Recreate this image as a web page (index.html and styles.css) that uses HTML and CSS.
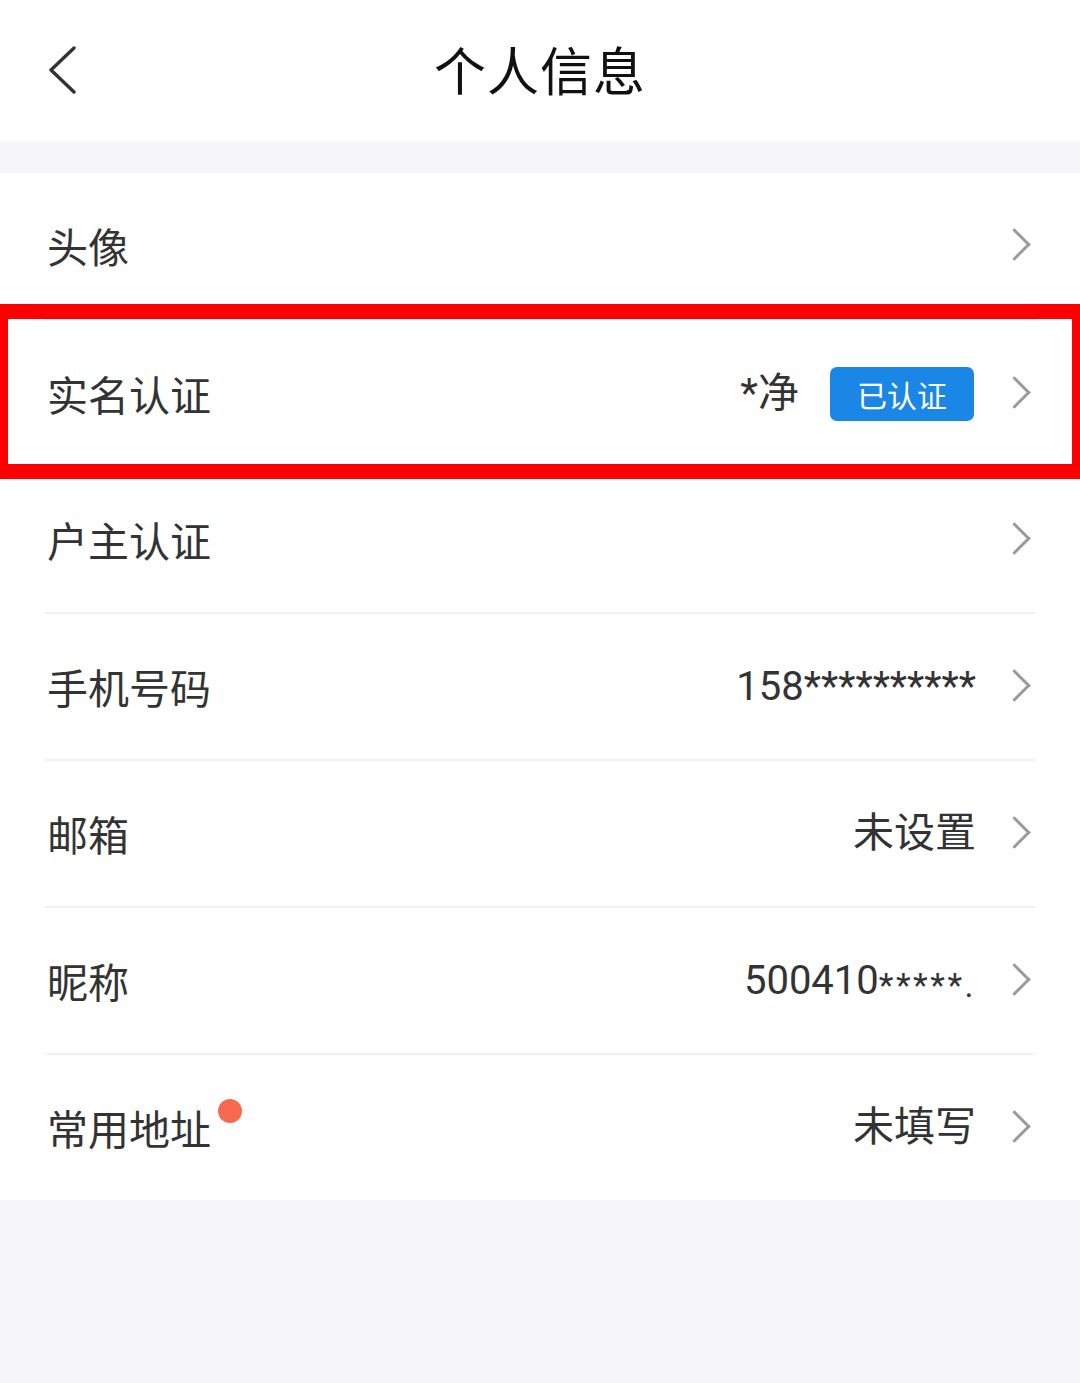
FILE: index.html
```html
<!DOCTYPE html>
<html lang="zh-CN">
<head>
<meta charset="utf-8">
<title>个人信息</title>
<link rel="stylesheet" href="styles.css">
</head>
<body>
<header class="header">
  <div class="back">
    <svg width="30" height="48" viewBox="0 0 30 48"><path d="M27 2 L4 24 L27 46" fill="none" stroke="#333" stroke-width="3.4" stroke-linecap="round" stroke-linejoin="round"/></svg>
  </div>
  <h1 class="title">个人信息</h1>
  <div></div>
</header>
<div class="band"></div>
<ul class="list">
  <li class="row"><div class="inner"><span class="label">头像</span><span class="chev"></span></div></li>
  <li class="row row-hl"><div class="inner"><span class="label">实名认证</span><span class="value">*净</span><span class="badge">已认证</span><span class="chev"></span></div></li>
  <li class="row"><div class="inner"><span class="label">户主认证</span><span class="chev"></span></div></li>
  <li class="row"><div class="inner"><span class="label">手机号码</span><span class="value num">158**********</span><span class="chev"></span></div></li>
  <li class="row"><div class="inner"><span class="label">邮箱</span><span class="value">未设置</span><span class="chev"></span></div></li>
  <li class="row"><div class="inner"><span class="label">昵称</span><span class="value num">500410<span class="small">*****.</span></span><span class="chev"></span></div></li>
  <li class="row row-last"><div class="inner"><span class="label">常用地址</span><span class="dot"></span><span class="value">未填写</span><span class="chev"></span></div></li>
</ul>
</body>
</html>
```
FILE: styles.css
```css
html, body {
  margin: 0;
  padding: 0;
}
body {
  width: 1080px;
  min-height: 1383px;
  background: #f6f6f8;
  font-family: Roboto, "Noto Sans CJK SC", sans-serif;
  color: #333;
}
.header {
  height: 142px;
  background: #fff;
  display: grid;
  grid-template-columns: 1fr auto 1fr;
  align-items: center;
}
.back {
  padding-left: 47px;
  display: flex;
  align-items: center;
  padding-bottom: 2px;
}
.back svg { display: block; }
.title {
  margin: 0;
  font-family: "Noto Sans CJK SC", sans-serif;
  font-weight: 400;
  font-size: 52px;
  color: #111;
  letter-spacing: 1px;
  line-height: 1;
  padding-bottom: 4px;
}
.band {
  height: 31px;
}
.list {
  list-style: none;
  margin: 0;
  padding: 0;
  background: #fff;
}
.row {
  height: 147px;
  padding: 0 45px;
  box-sizing: border-box;
}
.inner {
  height: 100%;
  box-sizing: border-box;
  border-bottom: 2px solid #f1f1f1;
  display: flex;
  align-items: center;
  padding: 0 3px 0 2px;
}
.row-last { height: 145px; }
.row-last .inner { border-bottom: none; }
.label {
  font-family: "Noto Sans CJK SC", sans-serif;
  font-size: 41px;
  color: #333;
  line-height: 1;
  margin-right: auto;
}
.value {
  font-size: 41px;
  line-height: 1;
  color: #333;
  margin-right: 36px;
}
.num {
  font-size: 40px;
}
.small {
  font-size: 34px;
  letter-spacing: 2.5px;
  position: relative;
  top: 3px;
}
.chev {
  width: 20px;
  height: 36px;
  position: relative;
  flex: none;
}
.chev::before {
  content: "";
  position: absolute;
  width: 23px;
  height: 23px;
  border-top: 3px solid #9a9a9a;
  border-right: 3px solid #9a9a9a;
  transform: rotate(45deg);
  left: -9px;
  top: 5px;
  box-sizing: border-box;
}
.row-hl {
  position: relative;
}
.row-hl::after {
  content: "";
  position: absolute;
  left: 0;
  right: 0;
  top: -16px;
  bottom: -12px;
  border-style: solid;
  border-color: #ff0000;
  border-width: 15px 8px;
  pointer-events: none;
}
.row-hl .inner { border-bottom: none; }
.row-hl .value { margin-right: 31px; }
.badge {
  width: 144px;
  height: 54px;
  border-radius: 7px;
  background: #1a87e7;
  color: #fff;
  font-family: "Noto Sans CJK SC", sans-serif;
  font-size: 30px;
  display: flex;
  align-items: center;
  justify-content: center;
  margin-right: 38px;
  line-height: 1;
}
.dot {
  width: 24px;
  height: 24px;
  border-radius: 50%;
  background: #f4694f;
  margin-left: -116px;
  margin-right: auto;
  position: relative;
  top: -17px;
}
.row-last .label { margin-right: 123px; }
```
